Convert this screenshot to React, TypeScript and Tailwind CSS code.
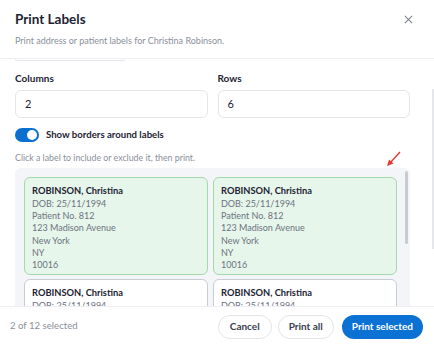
import React from "react";

const lines = ["DOB: 25/11/1994", "Patient No. 812", "123 Madison Avenue", "New York", "NY", "10016"];

const Card = ({ selected, visibleLines }: { selected: boolean; visibleLines: number }) => (
  <div
    className={
      "rounded-[6px] border px-[7px] pt-[7px] pb-[3px] text-[9px] leading-[12.3px] " +
      (selected ? "bg-[#e7f6ea] border-[#a3d9ab]" : "bg-white border-[#c9ccd3]")
    }
  >
    <div className="font-bold text-[9.3px] text-[#1c2333]">ROBINSON, Christina</div>
    {lines.slice(0, visibleLines).map((l) => (
      <div key={l} className="text-[#6b7280]">{l}</div>
    ))}
  </div>
);

export default function App() {
  return (
    <div
      className="relative w-[434px] h-[346px] overflow-hidden bg-white"
      style={{ fontFamily: "Lato, 'Noto Sans', sans-serif" }}
    >
      <div className="flex flex-col h-full">
        {/* header */}
        <div className="relative px-[15px] pt-[10px] pb-[11px] border-b border-[#eceef1] shrink-0">
          <div className="text-[13.5px] font-bold text-[#1c2333] leading-[18px]">Print Labels</div>
          <div className="text-[9px] text-[#8a909b] mt-[6px] leading-[13px]">
            Print address or patient labels for Christina Robinson.
          </div>
          <div className="absolute right-[21px] top-[15px] text-[#7c8290]">
            <svg width="9" height="9" viewBox="0 0 10 10">
              <path d="M1 1 L9 9 M9 1 L1 9" stroke="currentColor" strokeWidth="1.2" />
            </svg>
          </div>
        </div>
        {/* body */}
        <div className="relative flex-1 overflow-hidden">
          <div className="mx-[15px] w-[110px] h-[2px] border border-t-0 border-[#e3e5e9] rounded-b-[6px]" />
          <div className="pl-[15px] pt-[11px] pr-[24px]">
            <div className="grid grid-cols-2 gap-[10px]">
              <div>
                <div className="text-[10px] font-bold text-[#1c2333] leading-[13px]">Columns</div>
                <div className="mt-[5px] h-[28px] rounded-[6px] border border-[#e3e5e9] flex items-center px-[9px] text-[11px] text-[#1c2333]">2</div>
              </div>
              <div>
                <div className="text-[10px] font-bold text-[#1c2333] leading-[13px]">Rows</div>
                <div className="mt-[5px] h-[28px] rounded-[6px] border border-[#e3e5e9] flex items-center px-[9px] text-[11px] text-[#1c2333]">6</div>
              </div>
            </div>
            <div className="flex items-center gap-[7px] mt-[10px]">
              <div className="w-[24px] h-[14px] rounded-full bg-[#0b70d0] relative">
                <div className="absolute right-[2px] top-[2px] w-[10px] h-[10px] rounded-full bg-white" />
              </div>
              <div className="text-[9.6px] font-bold text-[#1c2333]">Show borders around labels</div>
            </div>
            <div className="text-[8.8px] text-[#8a909b] mt-[9px] leading-[13px]">
              Click a label to include or exclude it, then print.
            </div>
            <div className="relative mt-[4px] rounded-[6px] bg-[#f4f5f8] pl-[9px] pr-[13px] pt-[9px] pb-[10px]">
              <div className="grid grid-cols-2 gap-x-[5px] gap-y-[4px]">
                <Card selected visibleLines={6} />
                <Card selected visibleLines={6} />
                <Card selected={false} visibleLines={1} />
                <Card selected={false} visibleLines={1} />
              </div>
              <div className="absolute right-[2px] top-[3px] w-[3px] h-[73px] rounded-full bg-[#c8cbd2]" />
            </div>
          </div>
          {/* outer scrollbar */}
          <div className="absolute right-0 top-[30px] w-[2px] h-[160px] bg-[#e5e7eb]" />
          {/* red arrow */}
          <svg className="absolute left-[385px] top-[92px]" width="18" height="18" viewBox="0 0 18 18">
            <path d="M15 1 L5 12" stroke="#e53935" strokeWidth="1.4" />
            <path d="M2 15 L4 8.5 L8.5 12.5 Z" fill="#e53935" />
          </svg>
        </div>
        {/* footer */}
        <div className="shrink-0 h-[40px] border-t border-[#eceef1] bg-white flex items-center pl-[10px] pr-[11px]">
          <div className="text-[9.6px] text-[#8a909b]">2 of 12 selected</div>
          <div className="ml-auto flex items-center">
            <div className="h-[24px] px-[11px] rounded-full border border-[#e3e5e9] flex items-center text-[10px] font-bold text-[#3a4050]">Cancel</div>
            <div className="ml-[6px] h-[24px] px-[10px] rounded-full border border-[#e3e5e9] flex items-center text-[10px] font-bold text-[#3a4050]">Print all</div>
            <div className="ml-[8px] h-[24px] px-[10px] rounded-full bg-[#0b72d3] flex items-center text-[10px] font-bold text-white">Print selected</div>
          </div>
        </div>
      </div>
    </div>
  );
}
